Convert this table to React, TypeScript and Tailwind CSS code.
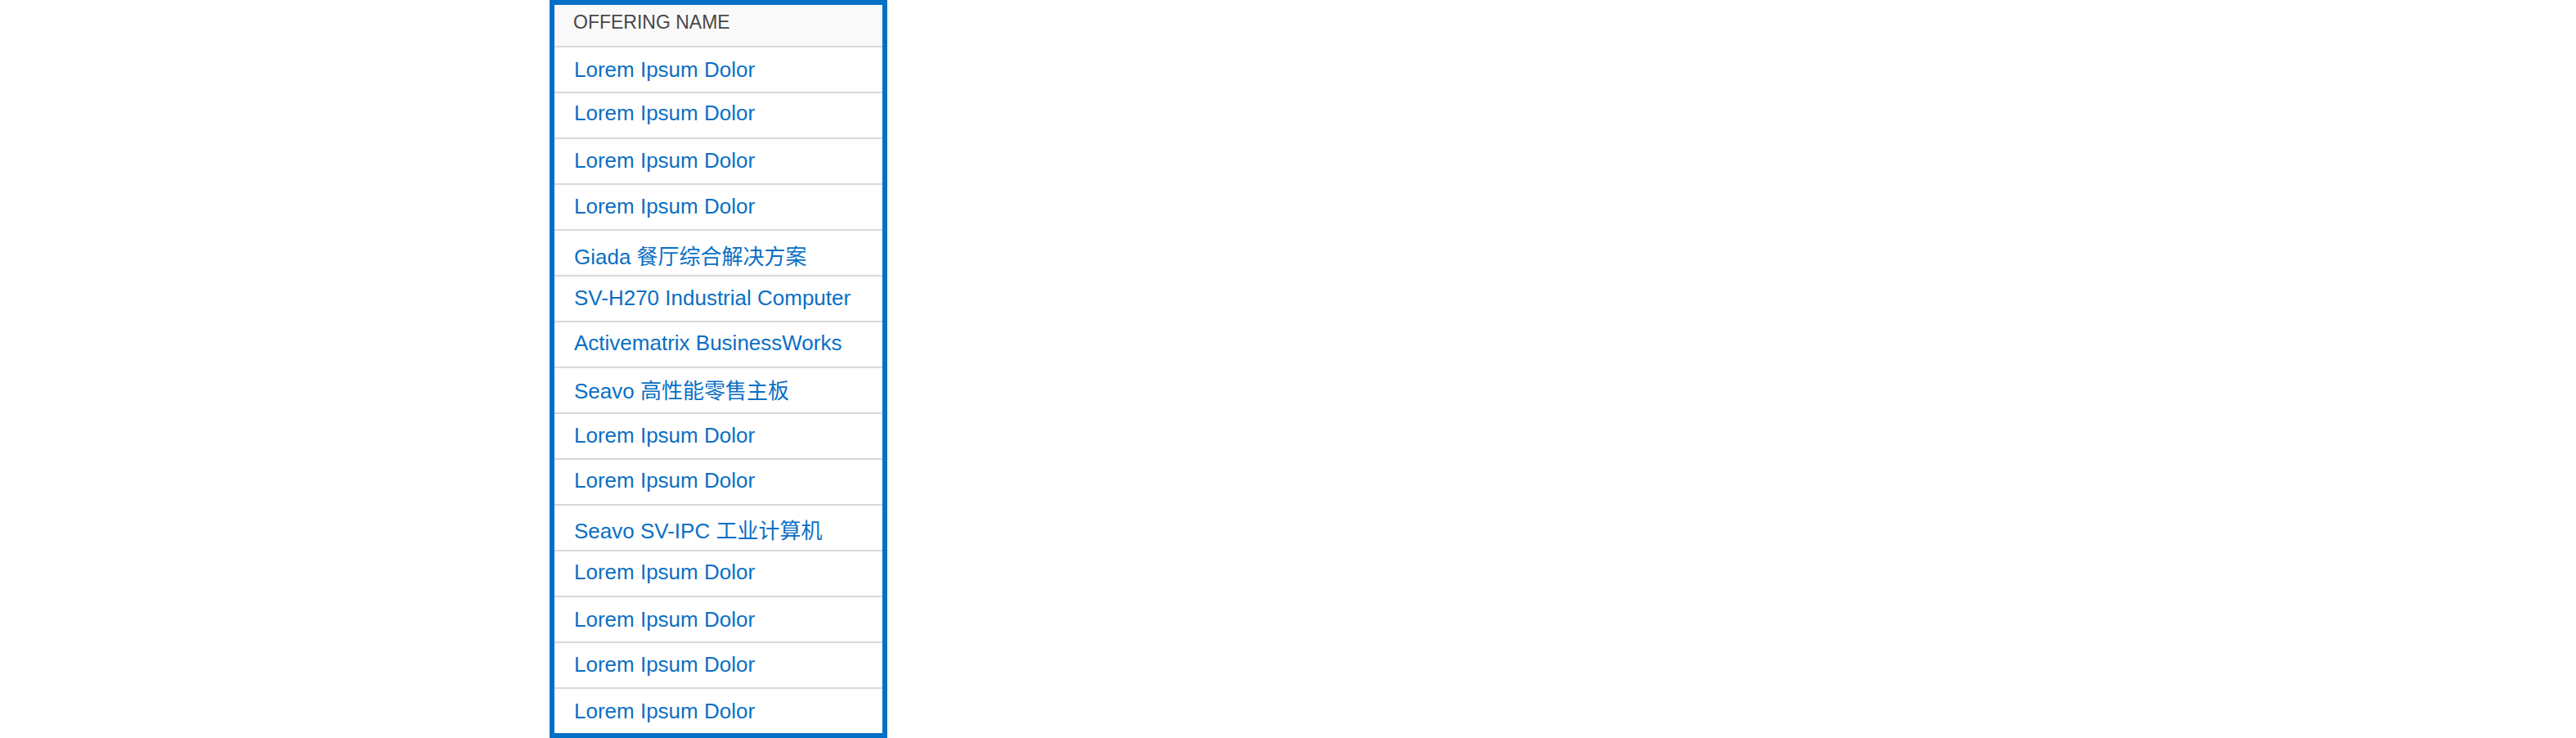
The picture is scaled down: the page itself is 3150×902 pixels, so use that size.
const rows: { name: string; pad: string }[] = [
  { name: "Lorem Ipsum Dolor", pad: "pt-[8px]" },
  { name: "Lorem Ipsum Dolor", pad: "pt-[5px]" },
  { name: "Lorem Ipsum Dolor", pad: "pt-[7px]" },
  { name: "Lorem Ipsum Dolor", pad: "pt-[7px]" },
  { name: "Giada 餐厅综合解决方案", pad: "pt-[13px]" },
  { name: "SV-H270 Industrial Computer", pad: "pt-[7px]" },
  { name: "Activematrix BusinessWorks", pad: "pt-[6px]" },
  { name: "Seavo 高性能零售主板", pad: "pt-[9px]" },
  { name: "Lorem Ipsum Dolor", pad: "pt-[7px]" },
  { name: "Lorem Ipsum Dolor", pad: "pt-[6px]" },
  { name: "Seavo SV-IPC 工业计算机", pad: "pt-[12px]" },
  { name: "Lorem Ipsum Dolor", pad: "pt-[6px]" },
  { name: "Lorem Ipsum Dolor", pad: "pt-[8px]" },
  { name: "Lorem Ipsum Dolor", pad: "pt-[7px]" },
  { name: "Lorem Ipsum Dolor", pad: "pt-[8px]" },
];

const App = () => {
  return (
    <div
      className="w-full h-[902px] bg-white overflow-hidden"
      style={{ fontFamily: '"Liberation Sans", "Noto Sans CJK SC", sans-serif' }}
    >
      <div className="ml-[672px] w-[413px] border-[6px] border-[#0270c6] bg-white">
        <div className="h-[50px] bg-[#f9f9f9] pl-[23px] pt-[4px] text-[23px] text-[#474747]">
          OFFERING NAME
        </div>
        <ul>
          {rows.map((row, i) => (
            <li
              key={i}
              className={`h-[56px] border-t-2 border-[#d9d9d9] pl-[24px] ${row.pad} text-[26px] text-[#0a6fc4] whitespace-nowrap`}
            >
              <a href="#" className="cursor-pointer">
                {row.name}
              </a>
            </li>
          ))}
        </ul>
      </div>
    </div>
  );
};

export default App;
